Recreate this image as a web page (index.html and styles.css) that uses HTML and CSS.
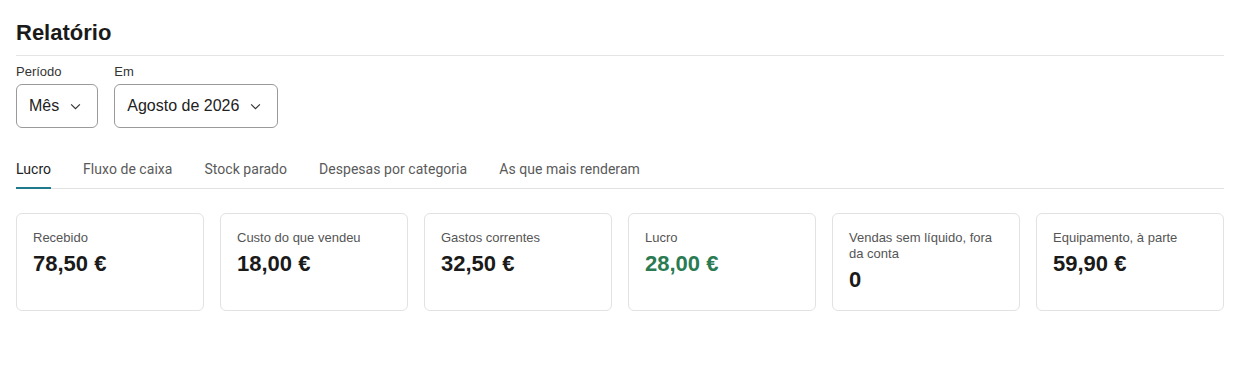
FILE: index.html
```html
<!DOCTYPE html>
<html lang="pt">
<head>
	<meta charset="UTF-8">
	<meta name="viewport" content="width=device-width, initial-scale=1.0">
	<title>Relatório</title>
	<link rel="stylesheet" href="styles.css">
</head>
<body>
	<div class="page">
		<h1 class="page-title">Relatório</h1>

		<div class="filters">
			<div class="field">
				<span class="field-label">Período</span>
				<button class="select">Mês
					<svg class="chevron" viewBox="0 0 12 8" width="11" height="7"><path d="M1 1.5l5 5 5-5" fill="none" stroke="#333" stroke-width="1.3"/></svg>
				</button>
			</div>
			<div class="field">
				<span class="field-label">Em</span>
				<button class="select">Agosto de 2026
					<svg class="chevron" viewBox="0 0 12 8" width="11" height="7"><path d="M1 1.5l5 5 5-5" fill="none" stroke="#333" stroke-width="1.3"/></svg>
				</button>
			</div>
		</div>

		<div class="tabs">
			<span class="tab active">Lucro</span>
			<span class="tab">Fluxo de caixa</span>
			<span class="tab">Stock parado</span>
			<span class="tab">Despesas por categoria</span>
			<span class="tab">As que mais renderam</span>
		</div>

		<div class="cards">
			<div class="card">
				<div class="card-label">Recebido</div>
				<div class="card-value">78,50 €</div>
			</div>
			<div class="card">
				<div class="card-label">Custo do que vendeu</div>
				<div class="card-value">18,00 €</div>
			</div>
			<div class="card">
				<div class="card-label">Gastos correntes</div>
				<div class="card-value">32,50 €</div>
			</div>
			<div class="card">
				<div class="card-label">Lucro</div>
				<div class="card-value positive">28,00 €</div>
			</div>
			<div class="card">
				<div class="card-label">Vendas sem líquido, fora da conta</div>
				<div class="card-value">0</div>
			</div>
			<div class="card">
				<div class="card-label">Equipamento, à parte</div>
				<div class="card-value">59,90 €</div>
			</div>
		</div>
	</div>
</body>
</html>
```

FILE: styles.css
```css
body {
	margin: 0;
	font-family: "Liberation Sans", Arial, sans-serif;
	background-color: #ffffff;
	color: #1a1a1a;
}
.page {
	padding: 0 16px;
}
.page-title {
	margin: 0;
	padding: 19px 0 8px;
	font-size: 22px;
	line-height: 28px;
	font-weight: bold;
	color: #1a1a1a;
	border-bottom: 1px solid #e4e4e4;
}
.filters {
	display: flex;
	gap: 16px;
	margin-top: 8px;
}
.field {
	display: flex;
	flex-direction: column;
	gap: 4px;
}
.field-label {
	font-size: 13px;
	line-height: 16px;
	color: #333333;
}
.select {
	display: flex;
	align-items: center;
	gap: 11px;
	height: 44px;
	padding: 0 16px 0 12px;
	font-family: "Liberation Sans", Arial, sans-serif;
	font-size: 16px;
	color: #222222;
	background-color: #ffffff;
	border: 1px solid #9a9a9a;
	border-radius: 6px;
}
.chevron {
	display: block;
}
.tabs {
	display: flex;
	gap: 32px;
	margin-top: 31px;
	border-bottom: 1px solid #e2e2e2;
}
.tab {
	font-family: Roboto, "Liberation Sans", sans-serif;
	font-size: 14px;
	letter-spacing: 0.04px;
	line-height: 20px;
	color: #5a5a5a;
	padding-bottom: 8px;
	margin-bottom: -1px;
	border-bottom: 2px solid transparent;
}
.tab.active {
	color: #222222;
	border-bottom-color: #1f7a8c;
}
.cards {
	display: grid;
	grid-template-columns: repeat(6, 1fr);
	gap: 16px;
	margin-top: 24px;
}
.card {
	border: 1px solid #e2e2e2;
	border-radius: 6px;
	padding: 16px;
	min-height: 64px;
}
.card-label {
	font-size: 13px;
	line-height: 16px;
	color: #555555;
}
.card-value {
	margin-top: 5px;
	font-size: 22px;
	line-height: 26px;
	font-weight: bold;
	color: #1a1a1a;
}
.card-value.positive {
	color: #2a7a52;
}
```
